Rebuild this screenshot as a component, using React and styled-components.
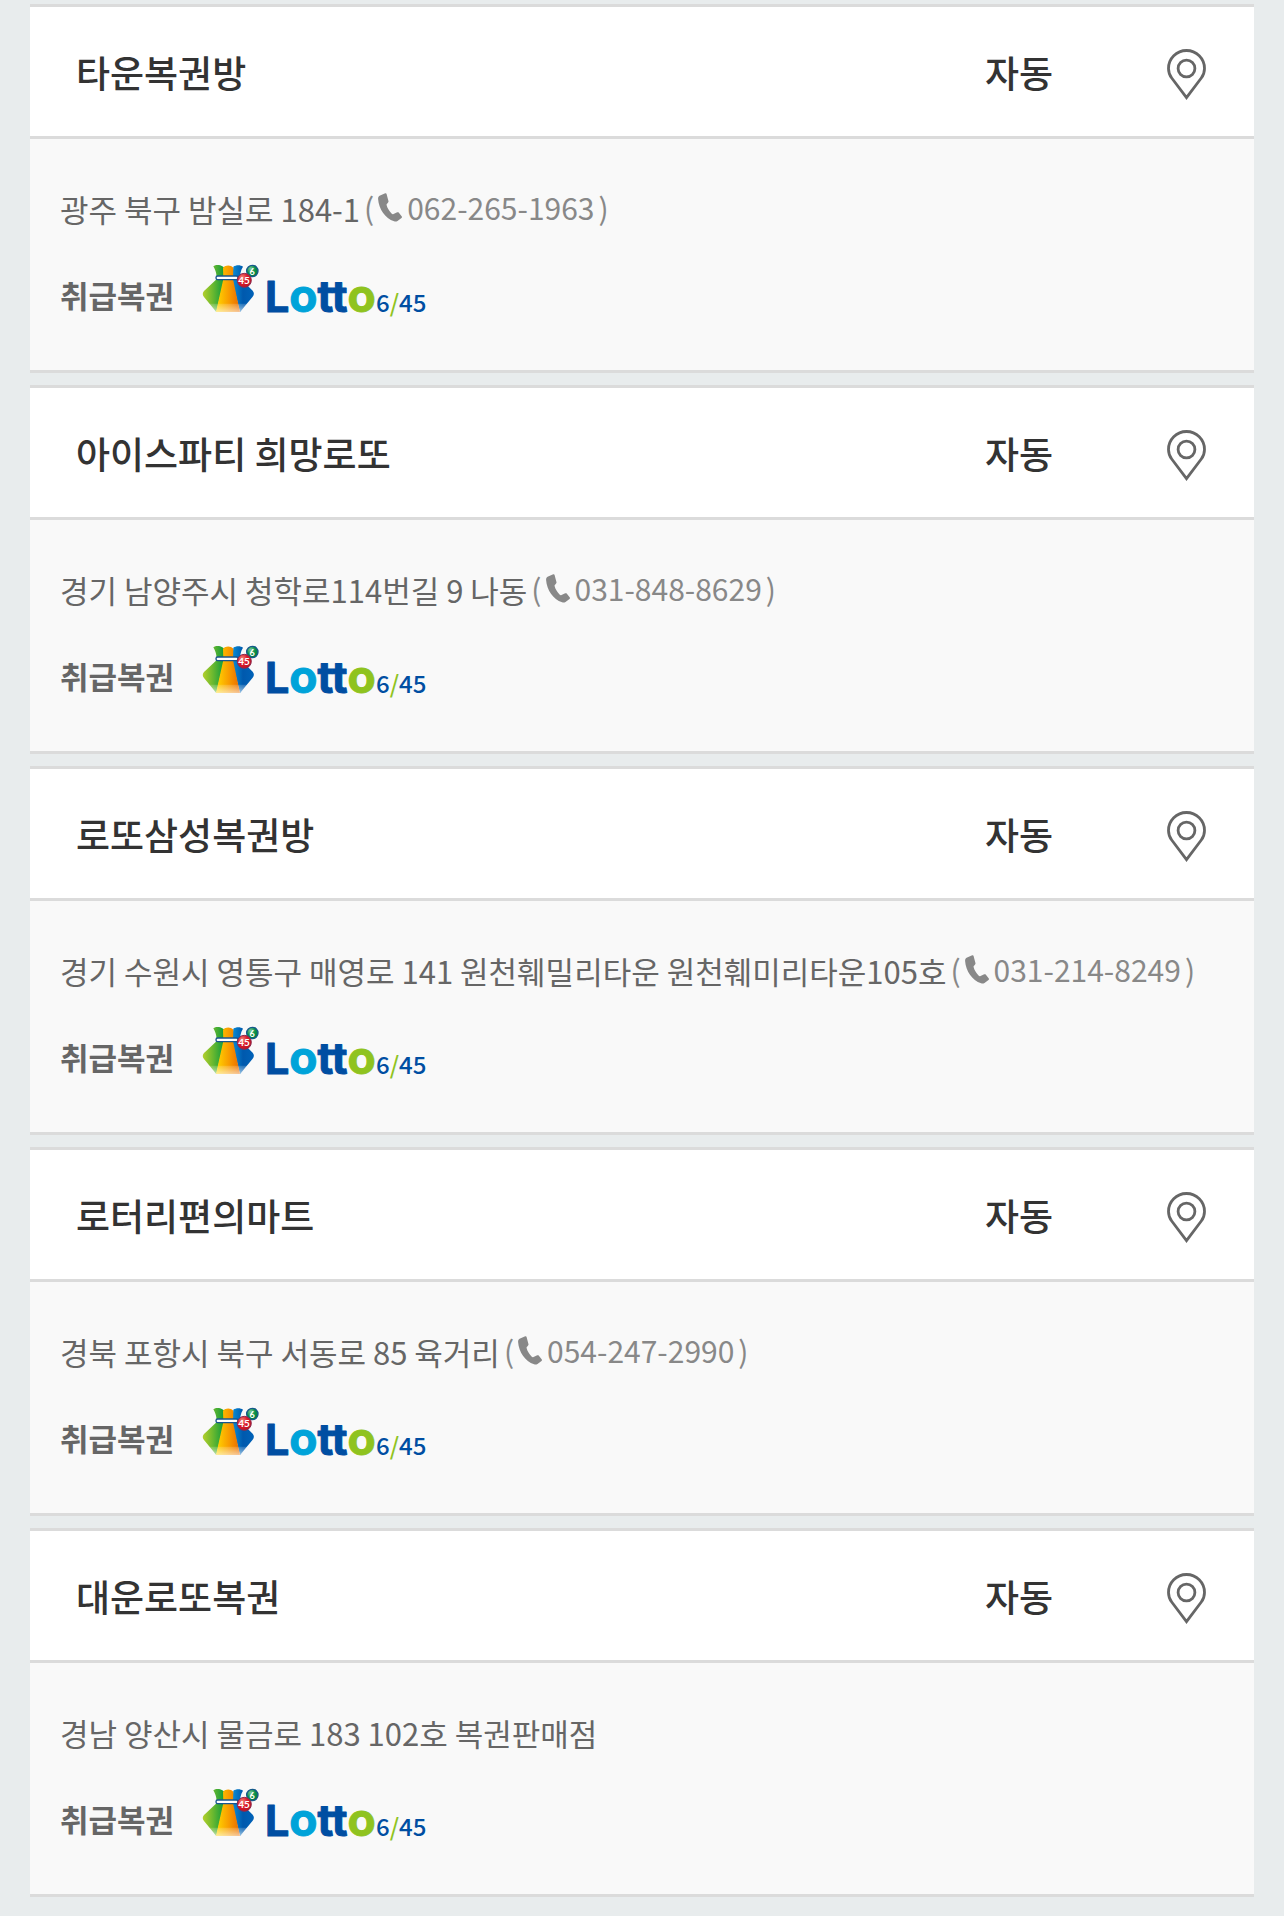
import styled, { createGlobalStyle } from 'styled-components';

const colors = {
  page: '#e8eced',
  line: '#dbdbdb',
  head: '#ffffff',
  body: '#f9f9f9',
  title: '#333333',
  text: '#666666',
  phone: '#888888',
};

const GlobalStyle = createGlobalStyle`
  * {
    box-sizing: border-box;
  }

  body {
    margin: 0;
    background: ${colors.page};
    font-family: 'Noto Sans CJK KR', 'Noto Sans', sans-serif;
    color: ${colors.text};
  }
`;

const StoreList = styled.ul`
  display: flex;
  flex-direction: column;
  gap: 12px;
  margin: 0;
  padding: 4px 30px 19px;
  list-style: none;
`;

const Card = styled.li`
  border-top: 3px solid ${colors.line};
  border-bottom: 3px solid ${colors.line};
  background: ${colors.body};
`;

const CardHead = styled.div`
  display: grid;
  grid-template-columns: minmax(0, 1fr) 202px 134px;
  align-items: center;
  padding: 37px 0 36px 46px;
  background: ${colors.head};
  border-bottom: 3px solid ${colors.line};
`;

const StoreName = styled.h2`
  margin: 0;
  font-size: 37px;
  font-weight: 500;
  line-height: 56px;
  color: ${colors.title};
`;

const Method = styled.span`
  font-size: 37px;
  font-weight: 500;
  line-height: 56px;
  text-align: center;
  color: ${colors.title};
`;

const MapButton = styled.button`
  display: flex;
  justify-content: center;
  padding: 4px 0 0;
  border: 0;
  background: none;
  cursor: pointer;
`;

const CardBody = styled.div`
  display: flex;
  flex-direction: column;
  gap: 31px;
  padding: 46px 30px 44px;
`;

const Address = styled.p`
  display: flex;
  align-items: center;
  gap: 4px;
  margin: 0;
  font-size: 31px;
  line-height: 48px;
  white-space: nowrap;
`;

const Phone = styled.span`
  display: flex;
  align-items: center;
  gap: 4px;
  padding-bottom: 4px;
  font-size: 30px;
  line-height: 44px;
  color: ${colors.phone};
`;

const PhoneLink = styled.a`
  display: flex;
  align-items: center;
  gap: 5px;
  color: inherit;
  text-decoration: none;
`;

const Handled = styled.div`
  display: flex;
  align-items: center;
  gap: 28px;
`;

const HandledLabel = styled.strong`
  font-size: 31px;
  font-weight: 700;
  line-height: 62px;
`;

const LogoSvg = styled.svg`
  display: block;
  overflow: visible;
`;

function PinIcon() {
  return (
    <svg width="40" height="52" viewBox="0 0 40 52" fill="none" stroke={colors.text} strokeWidth="2.8" aria-hidden>
      <path d="M19.500 49.600 4.700 30C2.400 26.900 1.500 24 1.500 20.400c0-9.800 8-17.900 18-17.900s18 8.100 18 17.900c0 3.600-.9 6.500-3.200 9.600L19.500 49.600z" />
      <circle cx="19.500" cy="20.500" r="8.400" />
    </svg>
  );
}

function PhoneIcon() {
  return (
    <svg width="24" height="29" viewBox="0 0 24 29" aria-hidden>
      <path
        d="M7.200.2 1.600 2.800C.5 3.400 0 4.500.1 6c.7 10.200 7 19.300 16 22.300 1.300.4 2.400.3 3.400-.4l4-2.900c.6-.5.7-1 .3-1.600l-3.100-3.800c-.4-.5-.9-.6-1.500-.3l-3.700 1.700c-.7.3-1.200.2-1.700-.3C11 17.900 9.200 14.800 8.600 12c-.1-.7.100-1.200.7-1.500L9.900 9.700c.5-.4.7-.8.6-1.400L8.500.8C8.300.2 7.800 0 7.200.2z"
        fill={colors.phone}
      />
    </svg>
  );
}

function LottoLogo({ id }) {
  const green = `${id}-green`;
  const orange = `${id}-orange`;
  const blue = `${id}-blue`;
  const shine = `${id}-shine`;
  const red = `${id}-red`;
  const ball = `${id}-ball`;

  return (
    <LogoSvg width="230" height="62" viewBox="0 0 230 62" role="img" aria-label="Lotto 6/45">
      <defs>
        <linearGradient id={green} x1="0" x2="1">
          <stop offset="0" stopColor="#b4cf2c" />
          <stop offset="0.45" stopColor="#6cb92f" />
          <stop offset="1" stopColor="#0b9a3c" />
        </linearGradient>
        <linearGradient id={orange} x1="0" x2="1">
          <stop offset="0" stopColor="#ffd800" />
          <stop offset="0.5" stopColor="#f9a000" />
          <stop offset="1" stopColor="#e86a00" />
        </linearGradient>
        <linearGradient id={blue} x1="0" x2="1">
          <stop offset="0" stopColor="#0a8fd8" />
          <stop offset="0.5" stopColor="#0059ad" />
          <stop offset="1" stopColor="#0062b8" />
        </linearGradient>
        <linearGradient id={shine} x1="0" x2="0" y1="0" y2="1">
          <stop offset="0" stopColor="#fff" stopOpacity="0.15" />
          <stop offset="1" stopColor="#fff" stopOpacity="0.6" />
        </linearGradient>
        <radialGradient id={red} cx="0.35" cy="0.3" r="0.8">
          <stop offset="0" stopColor="#f28a7c" />
          <stop offset="0.45" stopColor="#dc1d2c" />
          <stop offset="1" stopColor="#b80f20" />
        </radialGradient>
        <radialGradient id={ball} cx="0.35" cy="0.3" r="0.8">
          <stop offset="0" stopColor="#7cc79a" />
          <stop offset="0.5" stopColor="#0b9147" />
          <stop offset="1" stopColor="#007a3a" />
        </radialGradient>
      </defs>
      <g transform="translate(-12 -14) scale(0.3333)">
        <path d="M70 49c7-5 19-5 27 0l7 4-2 38-23 95L42 141c-5-6-5-12 0-18l36-34c4-13 0-25-8-40z" fill={`url(#${green})`} />
        <path d="M130 50c8-6 22-6 29 0-8 12-9 25-7 36l36 36c5 6 5 12 0 18l-38 46-24-96z" fill={`url(#${blue})`} />
        <path d="M99 53c8-9 23-9 31 0l-1 34 21 99H78l22-99z" fill={`url(#${orange})`} />
        <path d="M55 161h118l-23 25H79z" fill={`url(#${shine})`} />
        <rect x="78" y="78" width="66" height="11" rx="5" fill="#fff" stroke="#17558f" strokeWidth="4" />
        <circle cx="187" cy="63" r="17" fill={`url(#${ball})`} stroke="#14598b" strokeWidth="4" />
        <circle cx="163" cy="91" r="21" fill={`url(#${red})`} stroke="#8a2a50" strokeWidth="3" />
      </g>
      <g fontFamily="Lato, sans-serif" fontWeight="700" fill="#fff" textAnchor="middle">
        <text x="50" y="11" fontSize="9">6</text>
        <text x="42" y="20" fontSize="10">45</text>
      </g>
      <text x="63" y="48" fontFamily="Inter, sans-serif" fontWeight="700" fontSize="43" strokeWidth="1" strokeLinejoin="round">
        <tspan fill="#004ea2" stroke="#004ea2">L</tspan>
        <tspan fontSize="46" fill="#00a3d9" stroke="#00a3d9">o</tspan>
        <tspan fill="#004ea2" stroke="#004ea2">tt</tspan>
        <tspan fontSize="46" fill="#8fc31f" stroke="#8fc31f">o</tspan>
      </text>
      <text x="174" y="48" fontFamily="'Noto Sans CJK KR', sans-serif" fontWeight="500" fontSize="24" fill="#004ea2">
        6<tspan fill="#8fc31f">/</tspan>45
      </text>
    </LogoSvg>
  );
}

const stores = [
  { id: 'town', name: '타운복권방', method: '자동', address: '광주 북구 밤실로 184-1', phone: '062-265-1963' },
  { id: 'iceparty', name: '아이스파티 희망로또', method: '자동', address: '경기 남양주시 청학로114번길 9 나동', phone: '031-848-8629' },
  { id: 'samsung', name: '로또삼성복권방', method: '자동', address: '경기 수원시 영통구 매영로 141 원천훼밀리타운 원천훼미리타운105호', phone: '031-214-8249' },
  { id: 'rotary', name: '로터리편의마트', method: '자동', address: '경북 포항시 북구 서동로 85 육거리', phone: '054-247-2990' },
  { id: 'daewoon', name: '대운로또복권', method: '자동', address: '경남 양산시 물금로 183 102호 복권판매점' },
];

function StoreCard({ store }) {
  const { id, name, method, address, phone } = store;

  return (
    <Card>
      <CardHead>
        <StoreName>{name}</StoreName>
        <Method>{method}</Method>
        <MapButton type="button" aria-label={`${name} 지도`}>
          <PinIcon />
        </MapButton>
      </CardHead>
      <CardBody>
        <Address>
          {address}
          {phone ? (
            <Phone>
              (
              <PhoneLink href={`tel:${phone}`}>
                <PhoneIcon />
                {phone}
              </PhoneLink>
              )
            </Phone>
          ) : null}
        </Address>
        <Handled>
          <HandledLabel>취급복권</HandledLabel>
          <LottoLogo id={id} />
        </Handled>
      </CardBody>
    </Card>
  );
}

export default function App() {
  return (
    <>
      <GlobalStyle />
      <StoreList>
        {stores.map((store) => (
          <StoreCard key={store.id} store={store} />
        ))}
      </StoreList>
    </>
  );
}
